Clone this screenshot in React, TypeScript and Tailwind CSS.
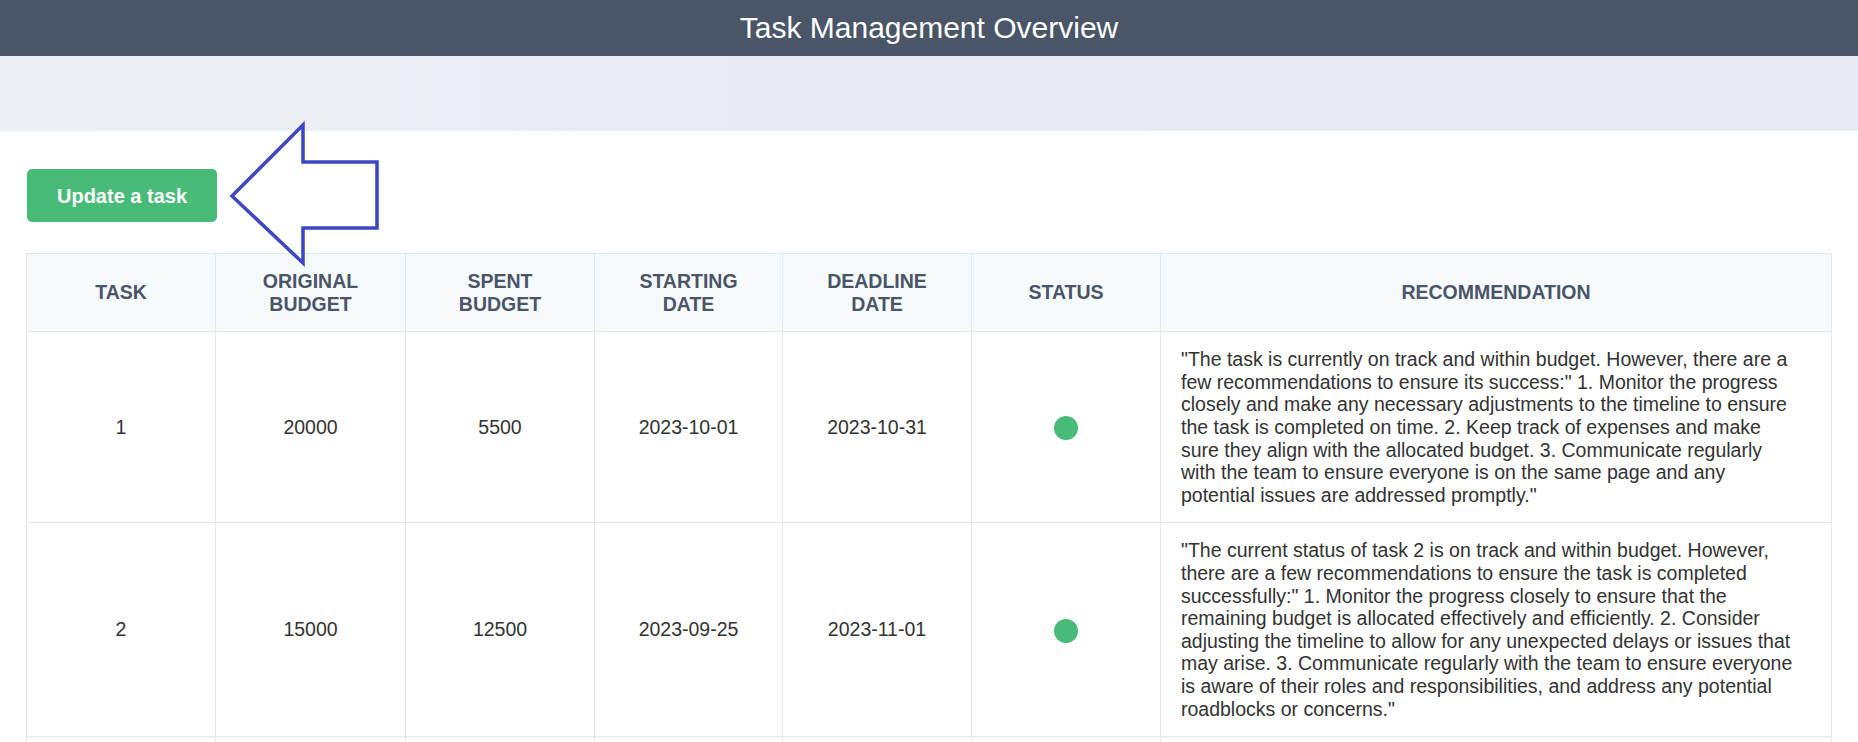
import React from "react";

type Task = {
  id: number;
  original: number;
  spent: number;
  start: string;
  deadline: string;
  status: "green" | "yellow" | "red";
  recommendation: string;
};

const tasks: Task[] = [
  {
    id: 1,
    original: 20000,
    spent: 5500,
    start: "2023-10-01",
    deadline: "2023-10-31",
    status: "green",
    recommendation:
      '"The task is currently on track and within budget. However, there are a few recommendations to ensure its success:" 1. Monitor the progress closely and make any necessary adjustments to the timeline to ensure the task is completed on time. 2. Keep track of expenses and make sure they align with the allocated budget. 3. Communicate regularly with the team to ensure everyone is on the same page and any potential issues are addressed promptly."',
  },
  {
    id: 2,
    original: 15000,
    spent: 12500,
    start: "2023-09-25",
    deadline: "2023-11-01",
    status: "green",
    recommendation:
      '"The current status of task 2 is on track and within budget. However, there are a few recommendations to ensure the task is completed successfully:" 1. Monitor the progress closely to ensure that the remaining budget is allocated effectively and efficiently. 2. Consider adjusting the timeline to allow for any unexpected delays or issues that may arise. 3. Communicate regularly with the team to ensure everyone is aware of their roles and responsibilities, and address any potential roadblocks or concerns."',
  },
  {
    id: 3,
    original: 10000,
    spent: 9000,
    start: "2023-10-05",
    deadline: "2023-10-20",
    status: "green",
    recommendation:
      '"The task is close to its budget limit. Keep a close eye on remaining expenses and communicate with the team about priorities."',
  },
];

const headers = [
  ["TASK"],
  ["ORIGINAL", "BUDGET"],
  ["SPENT", "BUDGET"],
  ["STARTING", "DATE"],
  ["DEADLINE", "DATE"],
  ["STATUS"],
];

export default function App() {
  return (
    <div
      className="relative min-h-screen bg-white text-[#333]"
      style={{ fontFamily: '"Liberation Sans", Arial, sans-serif' }}
    >
      <header className="h-[56px] bg-[#4a5568] flex items-center justify-center">
        <h1 className="text-[30px] text-white font-normal leading-none">Task Management Overview</h1>
      </header>
      <div className="h-[75px] bg-gradient-to-r from-[#edf0f5] via-[#e8ecf2] to-[#e7ebf1]" />

      <div className="px-[26px] pt-[38px]">
        <button className="h-[53px] w-[190px] rounded-[5px] bg-[#48bb78] text-white font-bold text-[20px] ml-px">
          Update a task
        </button>

        <table className="mt-[31px] w-full table-fixed border-collapse text-[19.5px]">
          <colgroup>
            <col className="w-[189px]" />
            <col className="w-[190px]" />
            <col className="w-[189px]" />
            <col className="w-[188px]" />
            <col className="w-[189px]" />
            <col className="w-[189px]" />
            <col />
          </colgroup>
          <thead>
            <tr className="bg-[#f7fafc]">
              {headers.map((h) => (
                <th
                  key={h.join(" ")}
                  className="border border-[#e2e8f0] px-4 py-4 font-bold text-[#4a5568] leading-[22.6px] text-center"
                >
                  {h.map((l) => (
                    <div key={l}>{l}</div>
                  ))}
                </th>
              ))}
              <th className="border border-[#e2e8f0] px-4 py-4 font-bold text-[#4a5568] leading-[22.6px] text-center">
                RECOMMENDATION
              </th>
            </tr>
          </thead>
          <tbody>
            {tasks.map((t) => (
              <tr key={t.id}>
                <td className="border border-[#e2e8f0] text-center">{t.id}</td>
                <td className="border border-[#e2e8f0] text-center">{t.original}</td>
                <td className="border border-[#e2e8f0] text-center">{t.spent}</td>
                <td className="border border-[#e2e8f0] text-center">{t.start}</td>
                <td className="border border-[#e2e8f0] text-center">{t.deadline}</td>
                <td className="border border-[#e2e8f0] text-center">
                  <span className="inline-block h-6 w-6 rounded-full bg-[#48bb78] align-middle" />
                </td>
                <td className="border border-[#e2e8f0] pl-5 pr-9 py-4 leading-[22.6px] text-left">
                  {t.recommendation}
                </td>
              </tr>
            ))}
          </tbody>
        </table>
      </div>

      {/* hand-drawn annotation arrow pointing at the button */}
      <svg
        className="absolute left-0 top-0 pointer-events-none"
        width="400"
        height="280"
        viewBox="0 0 400 280"
      >
        <polygon
          points="232,196 303,125 303,162 377,162 377,228 303,228 303,263"
          fill="none"
          stroke="#3d47c4"
          strokeWidth="3.5"
          strokeLinejoin="miter"
        />
      </svg>
    </div>
  );
}
